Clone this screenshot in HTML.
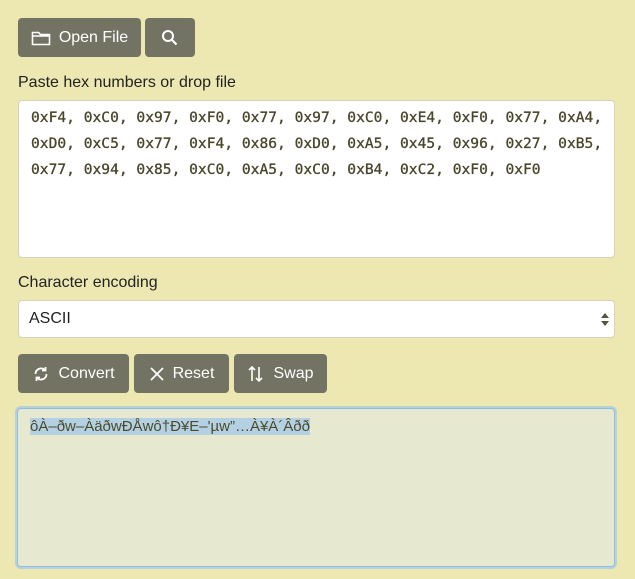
<!DOCTYPE html>
<html><head><style>
body{margin:0;width:635px;height:579px;background:#ede7b1;font-family:"Liberation Sans",sans-serif;position:relative;overflow:hidden;color:#222}
.btn{position:absolute;background:#737363;color:#fff;border-radius:4px;font-size:16px;height:39px;display:flex;align-items:center;justify-content:center;gap:8px}
.lbl{position:absolute;left:18px;font-size:16px;color:#222}
.box{position:absolute;left:18px;width:595px;background:#fff;border:1px solid #d6d3b6;border-radius:4px}
.mono{font-family:"DejaVu Sans Mono","Liberation Mono",monospace;font-size:14.6px;color:#48452a;line-height:26px;-webkit-text-stroke:0.3px #48452a}
</style></head><body>
<div class="btn" style="left:18px;top:18px;width:123px">
<svg width="20" height="16" viewBox="0 0 20 16"><path d="M1.5 2.5h6l2 2h9v10h-17z M1.5 6h17" fill="none" stroke="#fff" stroke-width="1.6"/></svg>Open File</div>
<div class="btn" style="left:145px;top:18px;width:50px">
<svg width="18" height="18" viewBox="0 0 18 18"><circle cx="7" cy="7" r="5" fill="none" stroke="#fff" stroke-width="2"/><path d="M10.5 10.5l5 5" stroke="#fff" stroke-width="2.2"/></svg></div>
<div class="lbl" style="top:74px">Paste hex numbers or drop file</div>
<div class="box mono" style="top:100px;height:156px;padding:0"><div style="padding:4px 0 0 12px;white-space:nowrap">0xF4, 0xC0, 0x97, 0xF0, 0x77, 0x97, 0xC0, 0xE4, 0xF0, 0x77, 0xA4,<br>0xD0, 0xC5, 0x77, 0xF4, 0x86, 0xD0, 0xA5, 0x45, 0x96, 0x27, 0xB5,<br>0x77, 0x94, 0x85, 0xC0, 0xA5, 0xC0, 0xB4, 0xC2, 0xF0, 0xF0</div></div>
<div class="lbl" style="top:274px">Character encoding</div>
<div class="box" style="top:300px;height:36px;font-size:16px;line-height:36px"><span style="padding-left:10px">ASCII</span>
<svg style="position:absolute;right:4px;top:11px" width="10" height="15" viewBox="0 0 10 15"><path d="M5 1L9 6H1z M5 14L9 9H1z" fill="#555540"/></svg></div>
<div class="btn" style="left:18px;top:354px;width:111px">
<svg width="18" height="18" viewBox="0 0 18 18" fill="none" stroke="#fff" stroke-width="1.8"><path d="M3.5 9a5.5 5.5 0 0 1 9.5-3.8M14.5 9a5.5 5.5 0 0 1-9.5 3.8"/><path d="M13.5 2v3.5H10M4.5 16v-3.5H8"/></svg>Convert</div>
<div class="btn" style="left:134px;top:354px;width:95px">
<svg width="16" height="16" viewBox="0 0 16 16"><path d="M2 2l12 12M14 2L2 14" stroke="#fff" stroke-width="1.8"/></svg>Reset</div>
<div class="btn" style="left:234px;top:354px;width:93px">
<svg width="18" height="18" viewBox="0 0 18 18" fill="none" stroke="#fff" stroke-width="1.6"><path d="M5 16V2M2 5l3-3 3 3M12 2v14M9 13l3 3 3-3"/></svg>Swap</div>
<div style="position:absolute;left:17px;top:408px;width:596px;height:157px;background:#e6e9d0;border:1px solid #8fbde8;border-radius:4px;box-shadow:0 0 0 2px #b5d2d8">
<div style="padding:9px 0 0 12px;font-size:15px;color:#4d4a2a"><span style="background:#b3d1e3">ôÀ–ðw–ÀäðwÐÅwô†Ð¥E–'µw”…À¥À´Âðð</span></div></div>
</body></html>
